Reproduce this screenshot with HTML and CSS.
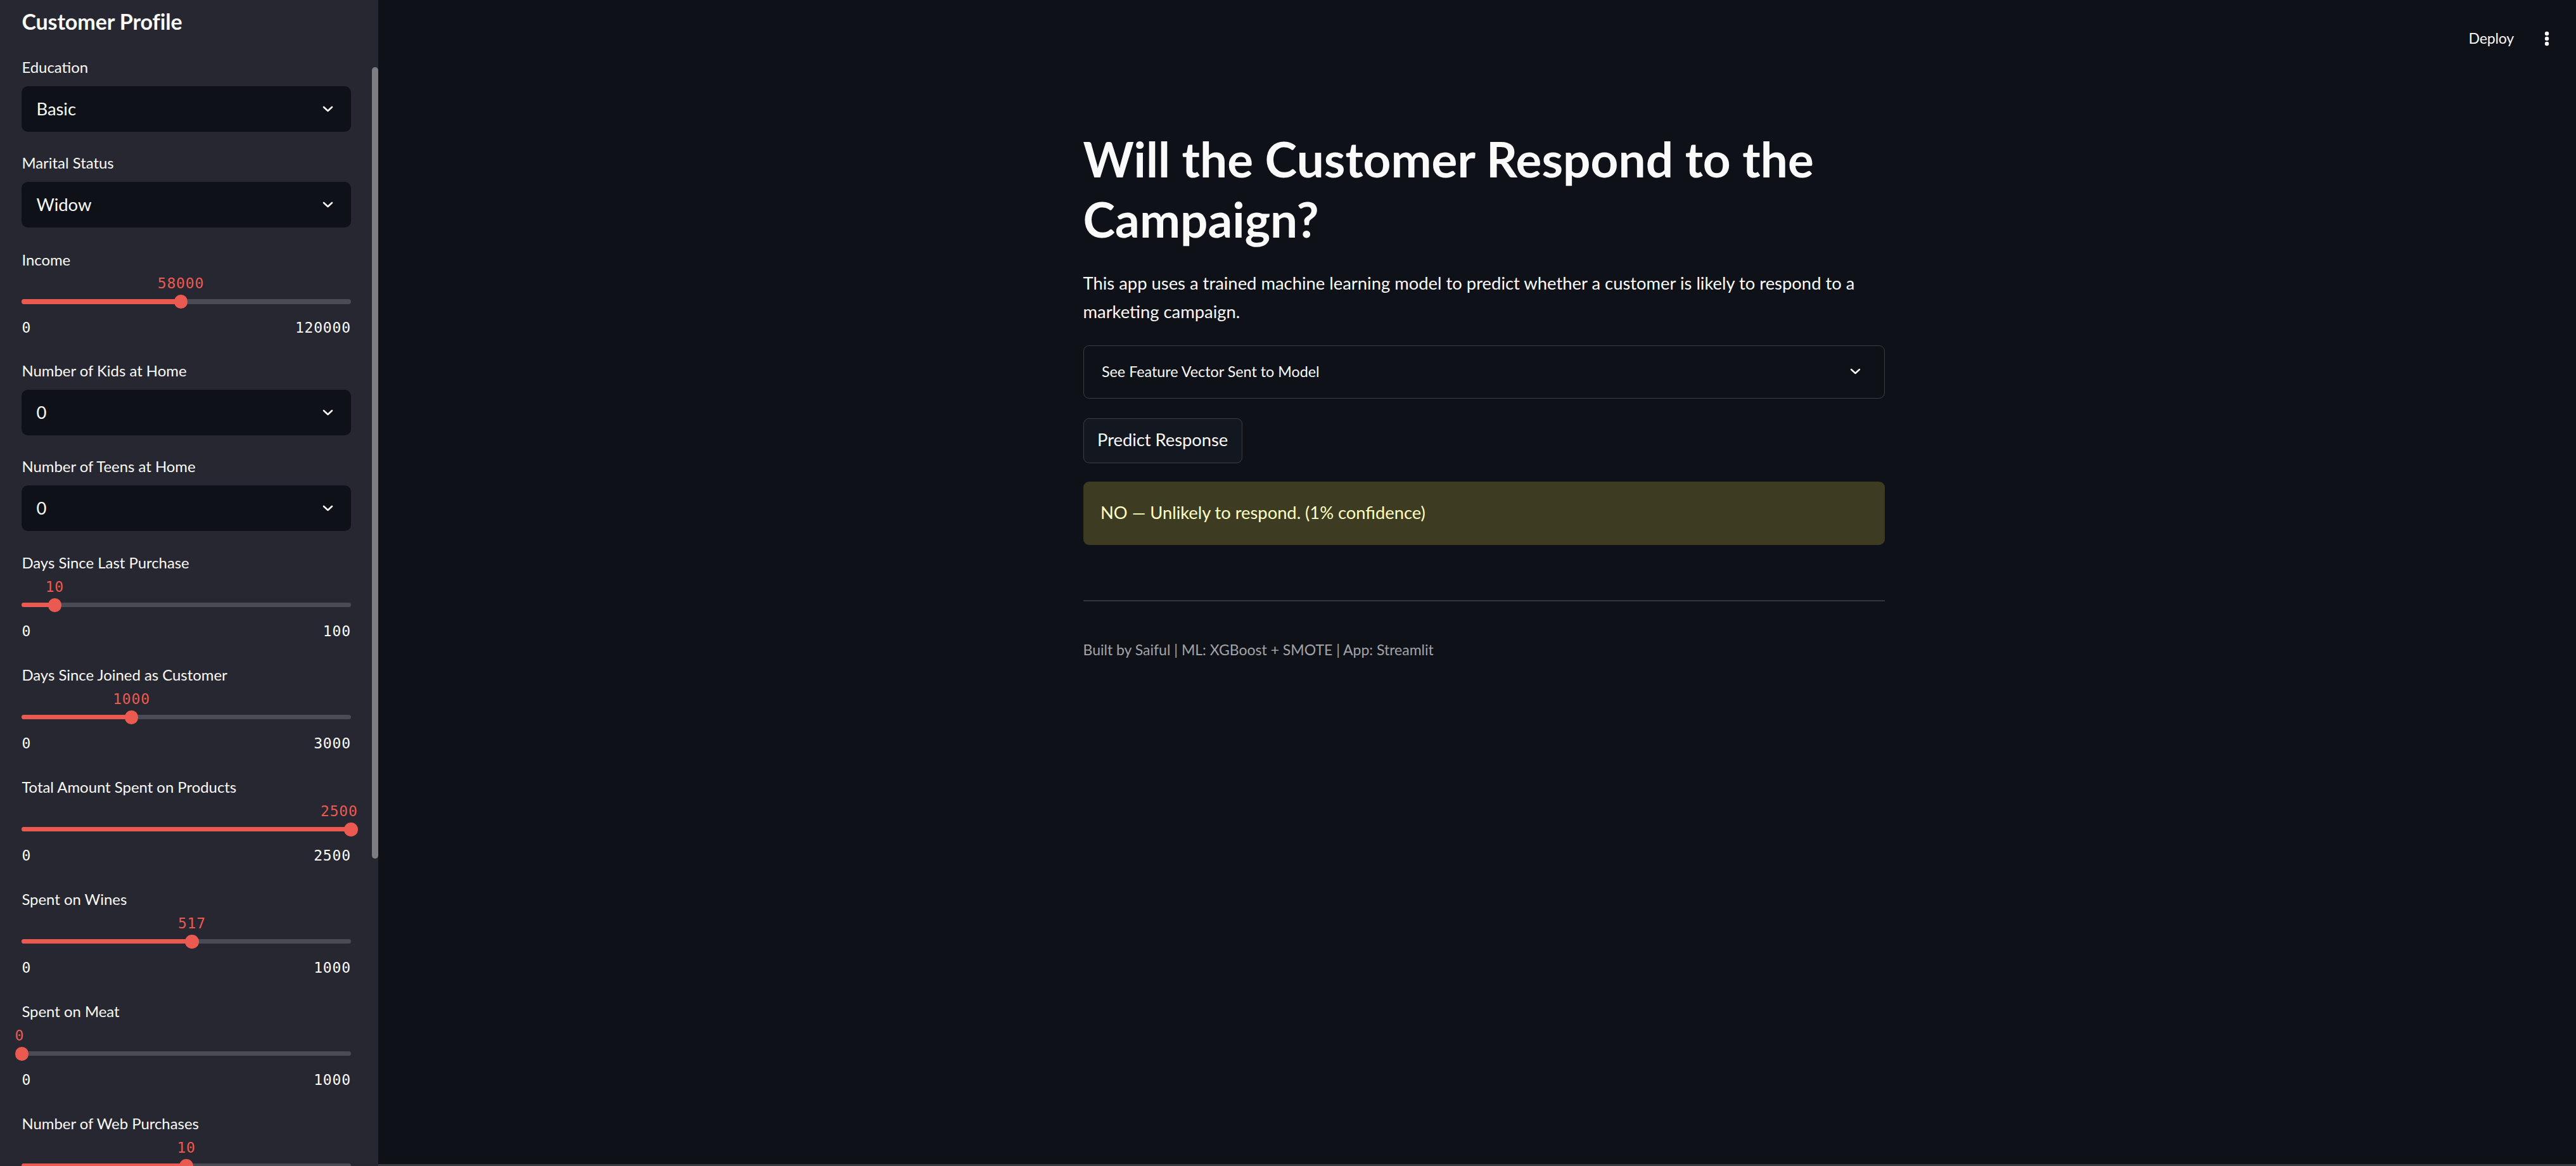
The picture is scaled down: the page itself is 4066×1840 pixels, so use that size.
FILE: index.html
```html
<!DOCTYPE html>
<html lang="en">
<head>
<meta charset="utf-8">
<title>Customer Response Predictor</title>
<link rel="stylesheet" href="styles.css">
</head>
<body>
<div class="app">
  <aside class="sidebar">
    <h2 class="sb-title">Customer Profile</h2>

    <div class="widget select-w">
      <div class="wlabel">Education</div>
      <div class="select"><span>Basic</span><svg class="chev" viewBox="0 0 17 10"><polyline points="2,2 8.5,8 15,2"/></svg></div>
    </div>

    <div class="widget select-w">
      <div class="wlabel">Marital Status</div>
      <div class="select"><span>Widow</span><svg class="chev" viewBox="0 0 17 10"><polyline points="2,2 8.5,8 15,2"/></svg></div>
    </div>

    <div class="widget slider-w">
      <div class="wlabel">Income</div>
      <div class="slider">
        <div class="val-row"><span class="val" style="left:48.333%">58000</span></div>
        <div class="track"><div class="fill" style="width:48.333%"></div><div class="thumb" style="left:48.333%"></div></div>
        <div class="ticks"><span>0</span><span>120000</span></div>
      </div>
    </div>

    <div class="widget select-w">
      <div class="wlabel">Number of Kids at Home</div>
      <div class="select"><span>0</span><svg class="chev" viewBox="0 0 17 10"><polyline points="2,2 8.5,8 15,2"/></svg></div>
    </div>

    <div class="widget select-w">
      <div class="wlabel">Number of Teens at Home</div>
      <div class="select"><span>0</span><svg class="chev" viewBox="0 0 17 10"><polyline points="2,2 8.5,8 15,2"/></svg></div>
    </div>

    <div class="widget slider-w">
      <div class="wlabel">Days Since Last Purchase</div>
      <div class="slider">
        <div class="val-row"><span class="val" style="left:10%">10</span></div>
        <div class="track"><div class="fill" style="width:10%"></div><div class="thumb" style="left:10%"></div></div>
        <div class="ticks"><span>0</span><span>100</span></div>
      </div>
    </div>

    <div class="widget slider-w">
      <div class="wlabel">Days Since Joined as Customer</div>
      <div class="slider">
        <div class="val-row"><span class="val" style="left:33.333%">1000</span></div>
        <div class="track"><div class="fill" style="width:33.333%"></div><div class="thumb" style="left:33.333%"></div></div>
        <div class="ticks"><span>0</span><span>3000</span></div>
      </div>
    </div>

    <div class="widget slider-w">
      <div class="wlabel">Total Amount Spent on Products</div>
      <div class="slider">
        <div class="val-row"><span class="val val-end">2500</span></div>
        <div class="track"><div class="fill" style="width:100%"></div><div class="thumb" style="left:100%"></div></div>
        <div class="ticks"><span>0</span><span>2500</span></div>
      </div>
    </div>

    <div class="widget slider-w">
      <div class="wlabel">Spent on Wines</div>
      <div class="slider">
        <div class="val-row"><span class="val" style="left:51.7%">517</span></div>
        <div class="track"><div class="fill" style="width:51.7%"></div><div class="thumb" style="left:51.7%"></div></div>
        <div class="ticks"><span>0</span><span>1000</span></div>
      </div>
    </div>

    <div class="widget slider-w">
      <div class="wlabel">Spent on Meat</div>
      <div class="slider">
        <div class="val-row"><span class="val val-start">0</span></div>
        <div class="track"><div class="fill" style="width:0%"></div><div class="thumb" style="left:0%"></div></div>
        <div class="ticks"><span>0</span><span>1000</span></div>
      </div>
    </div>

    <div class="widget slider-w">
      <div class="wlabel">Number of Web Purchases</div>
      <div class="slider">
        <div class="val-row"><span class="val" style="left:50%">10</span></div>
        <div class="track"><div class="fill" style="width:50%"></div><div class="thumb" style="left:50%"></div></div>
      </div>
    </div>

    <div class="scroll-thumb"></div>
  </aside>

  <main class="main">
    <header class="topbar">
      <span class="deploy">Deploy</span>
      <svg class="kebab" viewBox="0 0 8 24"><circle cx="4" cy="4" r="3.2"/><circle cx="4" cy="12" r="3.2"/><circle cx="4" cy="20" r="3.2"/></svg>
    </header>

    <section class="content">
      <h1 class="title">Will the Customer Respond to the Campaign?</h1>
      <p class="intro">This app uses a trained machine learning model to predict whether a customer is likely to respond to a marketing campaign.</p>
      <div class="expander"><span>See Feature Vector Sent to Model</span><svg class="chev chev-exp" viewBox="0 0 17 10"><polyline points="2,2 8.5,8 15,2"/></svg></div>
      <button class="btn">Predict Response</button>
      <div class="alert">NO — Unlikely to respond. (1% confidence)</div>
      <hr class="rule">
      <p class="footer">Built by Saiful | ML: XGBoost + SMOTE | App: Streamlit</p>
    </section>
  </main>
</div>
</body>
</html>
```
FILE: styles.css
```css
* { box-sizing: border-box; }
html, body { margin: 0; padding: 0; }
body {
  width: 4066px;
  height: 1840px;
  overflow: hidden;
  background: #0e1117;
  color: #fafafa;
  font-family: "Lato", "Noto Sans", sans-serif;
}
.app { display: flex; height: 1840px; }

/* ---------- sidebar ---------- */
.sidebar {
  position: relative;
  flex: 0 0 597px;
  height: 1840px;
  overflow: hidden;
  background: #262730;
  padding: 13.5px 43.2px 0 34.4px;
  display: flex;
  flex-direction: column;
  gap: 28.8px;
}
.sb-title {
  margin: 0 0 4.55px 0;
  font-size: 34px;
  line-height: 40px;
  font-weight: 700;
  letter-spacing: -0.1px;
  color: #fafafa;
}
.widget { flex: 0 0 auto; }
.wlabel {
  height: 38px;
  font-size: 23.9px;
  line-height: 38px;
  color: #fafafa;
  white-space: nowrap;
}
.select-w .select { margin-top: 11.15px; margin-bottom: 1px; }
.select {
  height: 72px;
  background: #0e1117;
  border-radius: 10px;
  display: flex;
  align-items: center;
  justify-content: space-between;
  padding: 0 28.3px 0 23px;
  font-size: 27.4px;
  color: #fafafa;
}
.chev { width: 17px; height: 10px; fill: none; stroke: #fafafa; stroke-width: 2.6; stroke-linecap: round; stroke-linejoin: round; }

.slider-w { padding-top: 1.85px; }
.slider {
  height: 108.35px;
  padding-top: 6.65px;
  font-family: "DejaVu Sans Mono", "Liberation Mono", monospace;
  font-size: 23px;
  letter-spacing: 0.8px;
}
.val-row { position: relative; height: 24px; line-height: 24px; }
.val {
  position: absolute;
  top: 0;
  transform: translateX(-50%);
  color: #eb5a51;
  white-space: nowrap;
}
.val-end { left: calc(100% + 10.8px); transform: translateX(-100%); }
.val-start { left: -10.8px; transform: none; }
.track {
  position: relative;
  margin-top: 13.2px;
  height: 7.2px;
  border-radius: 4px;
  background: #494b55;
}
.fill { height: 100%; border-radius: 4px; background: #eb5a51; }
.thumb {
  position: absolute;
  top: -7.2px;
  width: 21.6px;
  height: 21.6px;
  margin-left: -10.8px;
  border-radius: 50%;
  background: #eb5a51;
}
.ticks {
  margin-top: 25.6px;
  height: 24px;
  line-height: 24px;
  display: flex;
  justify-content: space-between;
  color: #fafafa;
}
.scroll-thumb {
  position: absolute;
  top: 106px;
  right: 0;
  width: 10px;
  height: 1249px;
  border-radius: 5px;
  background: #7c7c82;
}

/* ---------- main ---------- */
.main {
  flex: 1 1 auto;
  height: 1840px;
  border-bottom: 3px solid #3a3b3e;
  display: flex;
  flex-direction: column;
}
.topbar {
  height: 108px;
  display: flex;
  justify-content: flex-end;
  align-items: flex-start;
  padding: 46.4px 42px 0 0;
}
.deploy {
  font-size: 23px;
  line-height: 28px;
  letter-spacing: -0.15px;
  color: #fafafa;
}
.kebab { width: 8px; height: 24px; margin: 3.1px 0 0 48px; fill: #fafafa; }

.content {
  width: 1265px;
  margin-left: 1112.5px;
  padding-top: 95px;
  display: flex;
  flex-direction: column;
  align-items: flex-start;
}
.title {
  margin: 0;
  width: 100%;
  font-size: 76.5px;
  line-height: 95px;
  font-weight: 700;
  color: #fafafa;
}
.intro {
  margin: 30.6px 0 0 0;
  font-size: 27.4px;
  line-height: 45px;
  color: #fafafa;
}
.expander {
  margin-top: 31.9px;
  width: 100%;
  height: 84px;
  border: 1px solid #3b3d43;
  border-radius: 9px;
  display: flex;
  align-items: center;
  justify-content: space-between;
  padding: 0 37px 2px 28.5px;
  font-size: 23.3px;
  color: #fafafa;
}
.chev-exp { stroke-width: 2.4; }
.btn {
  margin-top: 30.3px;
  height: 71px;
  padding: 0 21.5px 3px 21.5px;
  background: #131720;
  border: 1px solid #3b3d43;
  border-radius: 9px;
  font-family: "Lato", "Noto Sans", sans-serif;
  font-size: 27.3px;
  color: #fafafa;
}
.alert {
  margin-top: 29.2px;
  width: 100%;
  height: 100px;
  border-radius: 9px;
  background: #3d3c22;
  color: #ffffc2;
  display: flex;
  align-items: center;
  padding: 0 27.5px 3px 27.5px;
  font-size: 27.3px;
}
.rule {
  margin: 87.4px 0 0 0;
  width: 100%;
  height: 2px;
  border: 0;
  background: #34363c;
}
.footer {
  margin: 57.8px 0 0 0;
  font-size: 23px;
  line-height: 36.8px;
  color: #a3a4a7;
}
```
